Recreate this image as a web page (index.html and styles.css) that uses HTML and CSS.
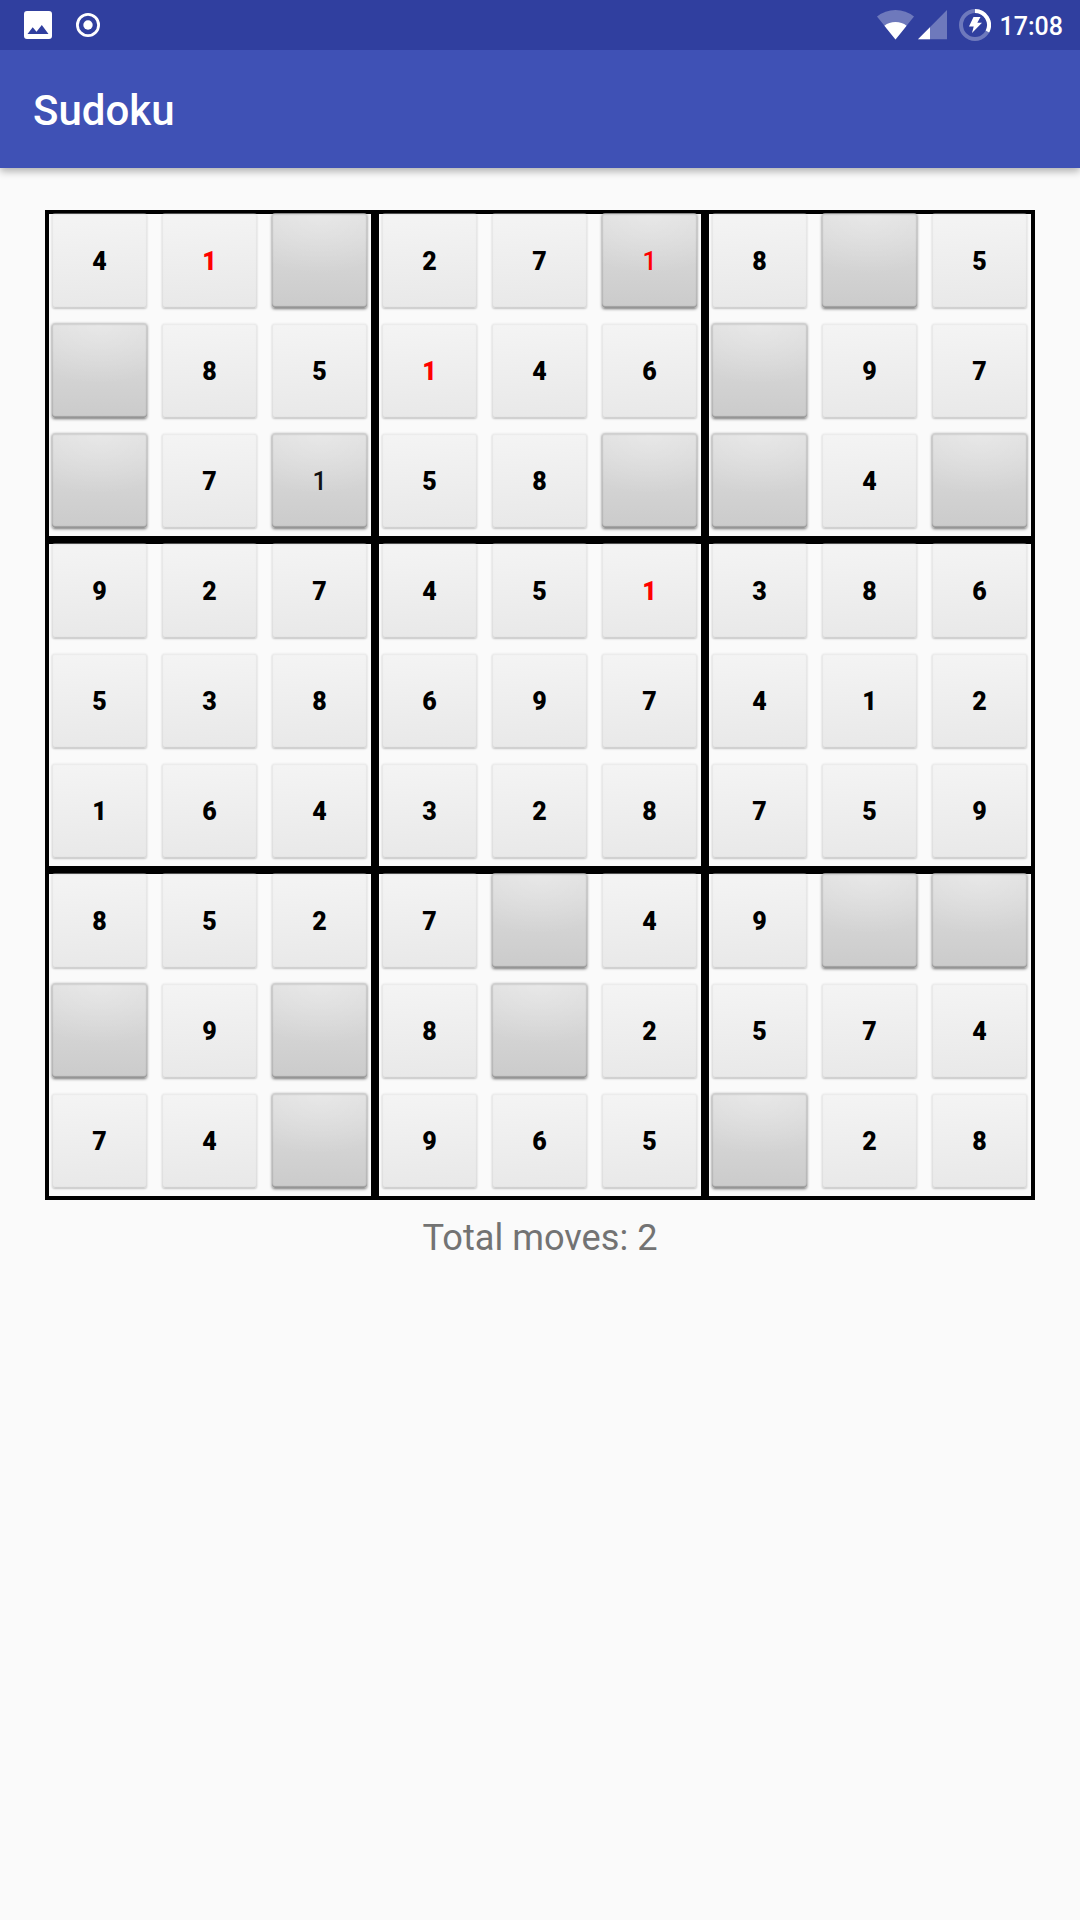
FILE: index.html
```html
<!DOCTYPE html>
<html lang="en">
<head>
<meta charset="utf-8">
<title>Sudoku</title>
<link rel="stylesheet" href="styles.css">
</head>
<body>
<header class="status-bar">
  <div class="notifications">
    <svg class="icon-image" width="28" height="28" viewBox="0 0 28 28"><path fill="#fff" fill-rule="evenodd" d="M3 0h22A3 3 0 0 1 28 3v22a3 3 0 0 1-3 3H3A3 3 0 0 1 0 25V3A3 3 0 0 1 3 0zM3.500 23h21l-6.700-9-5.300 6.800-3.800-4.500z"/></svg>
    <svg class="icon-record" width="24" height="24" viewBox="0 0 24 24"><circle cx="12" cy="12" r="10.600" fill="none" stroke="#fff" stroke-width="2.800"/><circle cx="12" cy="12" r="4.700" fill="#fff"/></svg>
  </div>
  <div class="system">
    <svg class="icon-wifi" width="37" height="30" viewBox="0 0 37 30"><path fill="#fff" fill-opacity=".3" d="M0 6.600Q8 0 18.500 0T37 6.600L18.500 29.500z"/><path fill="#fff" d="M7.400 15.700Q12 12 18.500 12T29.600 15.700L18.500 29.500z"/></svg>
    <svg class="icon-signal" width="29" height="30" viewBox="0 0 29 30"><path fill="#fff" fill-opacity=".3" d="M29 0v29.300H0z"/><path fill="#fff" d="M12 17.200v12.100H0z"/></svg>
    <svg class="icon-battery" width="32" height="32" viewBox="0 0 32 32"><circle cx="16" cy="16" r="14" fill="none" stroke="#fff" stroke-opacity=".3" stroke-width="4"/><path d="M16 2a14 14 0 0 1 12.400 20.500" fill="none" stroke="#fff" stroke-width="4"/><path fill="#fff" d="M14.500 8h7l-3.200 5.700h4.700L13 24l1.700-6.600H10z"/></svg>
    <span class="clock">17:08</span>
  </div>
</header>
<div class="app-bar"><h1 class="title">Sudoku</h1></div>
<main class="content">
  <div class="board">
    <div class="block">
      <button class="cell">4</button><button class="cell conflict">1</button><button class="cell open"></button>
      <button class="cell open"></button><button class="cell">8</button><button class="cell">5</button>
      <button class="cell open"></button><button class="cell">7</button><button class="cell open">1</button>
    </div>
    <div class="block">
      <button class="cell">2</button><button class="cell">7</button><button class="cell open conflict">1</button>
      <button class="cell conflict">1</button><button class="cell">4</button><button class="cell">6</button>
      <button class="cell">5</button><button class="cell">8</button><button class="cell open"></button>
    </div>
    <div class="block">
      <button class="cell">8</button><button class="cell open"></button><button class="cell">5</button>
      <button class="cell open"></button><button class="cell">9</button><button class="cell">7</button>
      <button class="cell open"></button><button class="cell">4</button><button class="cell open"></button>
    </div>
    <div class="block">
      <button class="cell">9</button><button class="cell">2</button><button class="cell">7</button>
      <button class="cell">5</button><button class="cell">3</button><button class="cell">8</button>
      <button class="cell">1</button><button class="cell">6</button><button class="cell">4</button>
    </div>
    <div class="block">
      <button class="cell">4</button><button class="cell">5</button><button class="cell conflict">1</button>
      <button class="cell">6</button><button class="cell">9</button><button class="cell">7</button>
      <button class="cell">3</button><button class="cell">2</button><button class="cell">8</button>
    </div>
    <div class="block">
      <button class="cell">3</button><button class="cell">8</button><button class="cell">6</button>
      <button class="cell">4</button><button class="cell">1</button><button class="cell">2</button>
      <button class="cell">7</button><button class="cell">5</button><button class="cell">9</button>
    </div>
    <div class="block">
      <button class="cell">8</button><button class="cell">5</button><button class="cell">2</button>
      <button class="cell open"></button><button class="cell">9</button><button class="cell open"></button>
      <button class="cell">7</button><button class="cell">4</button><button class="cell open"></button>
    </div>
    <div class="block">
      <button class="cell">7</button><button class="cell open"></button><button class="cell">4</button>
      <button class="cell">8</button><button class="cell open"></button><button class="cell">2</button>
      <button class="cell">9</button><button class="cell">6</button><button class="cell">5</button>
    </div>
    <div class="block">
      <button class="cell">9</button><button class="cell open"></button><button class="cell open"></button>
      <button class="cell">5</button><button class="cell">7</button><button class="cell">4</button>
      <button class="cell open"></button><button class="cell">2</button><button class="cell">8</button>
    </div>
  </div>
  <p class="moves">Total moves: 2</p>
</main>
</body>
</html>
```
FILE: styles.css
```css
* { box-sizing: border-box; }

body {
  margin: 0;
  min-height: 1920px;
  background: #fafafa;
  font-family: Roboto, sans-serif;
}

.status-bar {
  position: relative;
  z-index: 1;
  display: flex;
  justify-content: space-between;
  height: 50px;
  padding: 0 17px 0 24px;
  background: #303f9f;
}

.notifications,
.system { display: flex; align-items: flex-start; }

.icon-image { margin-top: 11px; }
.icon-record { margin: 13px 0 0 24px; }
.icon-wifi { margin-top: 10px; }
.icon-signal { margin: 10px 0 0 4px; }
.icon-battery { margin: 9px 9px 0 12px; }

.clock {
  color: #fff;
  font-size: 25px;
  font-weight: 500;
  line-height: 54px;
}

.app-bar {
  display: flex;
  align-items: center;
  height: 118px;
  padding: 4px 33px 0;
  background: #3f51b5;
  box-shadow: 0 3px 8px rgba(0, 0, 0, .32);
}

.title {
  margin: 0;
  color: #fff;
  font-size: 42px;
  font-weight: 500;
  line-height: 50px;
}

.content { padding-top: 42px; }

.board {
  display: grid;
  grid-template-columns: repeat(3, 330px);
  justify-content: center;
}

.block {
  display: grid;
  grid-template: repeat(3, 110px) / repeat(3, 110px);
  box-shadow: inset 0 0 0 4px #000;
}

.cell {
  width: 95px;
  height: 95px;
  margin: 3px 8px 0 7px;
  padding: 1px 0 0;
  border: 0;
  border-top: 1px solid rgba(225, 225, 225, .35);
  border-radius: 3px;
  background: linear-gradient(177deg, #f4f4f4, #e8e8e8) padding-box;
  box-shadow: 0 1px 2px rgba(0, 0, 0, .22), inset 0 0 2px rgba(0, 0, 0, .12), inset 0 -1px 1px rgba(0, 0, 0, .08);
  color: #000;
  font: 900 25px Roboto, sans-serif;
}

.cell.open {
  border-top-color: rgba(190, 190, 190, .7);
  background: radial-gradient(ellipse 90px 60px at 50% 0, rgba(255, 255, 255, .3), transparent) padding-box, linear-gradient(#dedede, #cbcbcb) padding-box;
  box-shadow: 0 1px 3px rgba(0, 0, 0, .55), inset 0 0 2px rgba(0, 0, 0, .3), inset 0 -2px 1px rgba(0, 0, 0, .2);
  color: #111;
  font-weight: 500;
}

.cell.conflict { color: #f00; }

.moves {
  margin: 16px 0 0;
  color: #737373;
  font-size: 36.200px;
  line-height: 44px;
  text-align: center;
}
```
